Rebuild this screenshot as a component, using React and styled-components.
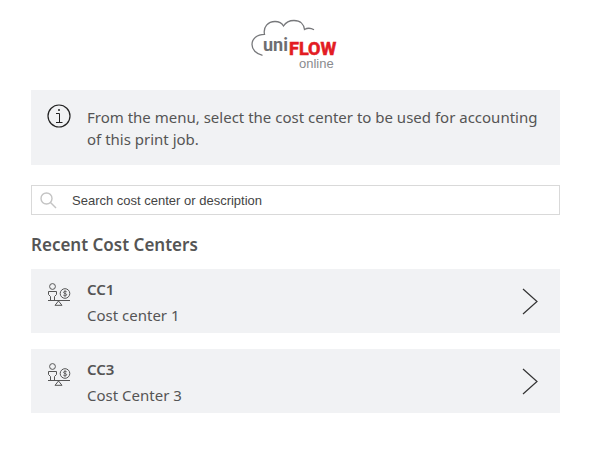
import React, { useState } from 'react';
import styled, { createGlobalStyle } from 'styled-components';

const costCenters = [
  { code: 'CC1', description: 'Cost center 1' },
  { code: 'CC3', description: 'Cost Center 3' },
]

const Logo = () => (
  <svg width="91" height="54" viewBox="10 7 91 54" role="img" aria-label="uniFLOW online">
    <path
      d="M22.500 45.300C16 44 12 39.500 12 34.500C12 29 17 24.300 24.500 24.300C23 17 28 11.500 35 11.500C39 11.500 42 13.300 43.500 16C46 12 50 10.500 54 10.500C60.500 10.500 64 14.500 64.500 19.500C67 18 71 18 74 19.800"
      fill="none" stroke="#77787b" strokeWidth="1.3"
    />
    <BrandText x="23" y="41" fill="#6d6e71">uni</BrandText>
    <BrandText x="49" y="45" fill="#e31b23" stroke="#e31b23" strokeWidth="0.600">FLOW</BrandText>
    <OnlineText x="59" y="58" fill="#8a8b8e">online</OnlineText>
  </svg>
)

const InfoIcon = () => (
  <svg width="24" height="24" viewBox="0 0 24 24" fill="none" stroke="#222" aria-hidden="true">
    <circle cx="12" cy="12" r="11" strokeWidth="1.2" />
    <path d="M9 9.500H12.500V18.500M9 18.500H15.500" />
    <circle cx="12" cy="6" r="1" fill="#222" stroke="none" />
  </svg>
)

const SearchIcon = () => (
  <svg width="18" height="18" viewBox="0 0 18 18" fill="none" stroke="#c4c4c4" strokeWidth="1.4" aria-hidden="true">
    <circle cx="6.500" cy="7.500" r="5.500" />
    <path d="M10.500 11.500L16 17" />
  </svg>
)

const BalanceIcon = () => (
  <svg width="24" height="24" viewBox="0 0 24 24" fill="none" stroke="#555" aria-hidden="true">
    <circle cx="5.500" cy="3.500" r="2.900" />
    <path d="M1.500 8.500H9.500V11.500L7.500 13.500V17.500H3.500V13.500L1.500 11.500Z" />
    <circle cx="18" cy="10.500" r="4.800" />
    <path d="M19.700 8.800C19 8 16.500 8.100 16.500 9.400C16.500 10.700 19.700 10.300 19.700 11.700C19.700 13 17 13.200 16.300 12.100M18 7.300V13.700" strokeWidth="0.900" />
    <path d="M1 17.500H23M11.500 18L8 22.300H15Z" />
  </svg>
)

const ArrowIcon = () => (
  <svg width="16" height="28" viewBox="0 0 16 28" fill="none" stroke="#333" strokeWidth="1.200" aria-hidden="true">
    <path d="M1 1L15 13.500L1 26" />
  </svg>
)

export default () => {
  const [ search, setSearch ] = useState('')

  return (
    <Page>
      <GlobalStyle />
      <Header>
        <Logo />
      </Header>
      <InfoBox>
        <InfoIcon />
        <InfoText>From the menu, select the cost center to be used for accounting of this print job.</InfoText>
      </InfoBox>
      <SearchBox>
        <SearchIcon />
        <SearchInput
          type="text"
          name="search"
          aria-label="Search cost center or description"
          placeholder="Search cost center or description"
          value={search}
          onChange={(e) => { setSearch(e.target.value) }}
        />
      </SearchBox>
      <Title>Recent Cost Centers</Title>
      <List>
        {costCenters.map(({ code, description }) => (
          <li key={code}>
            <CostCenter type="button">
              <BalanceIcon />
              <Details>
                <Code>{code}</Code>
                <span>{description}</span>
              </Details>
              <ArrowIcon />
            </CostCenter>
          </li>
        ))}
      </List>
    </Page>
  )
}

const GlobalStyle = createGlobalStyle`
  * {
    box-sizing: border-box;
  }

  body {
    margin: 0;
    background-color: #fff;
    color: #555;
    font-family: "Segoe UI", "Noto Sans", sans-serif;
    font-size: 15px;
    line-height: 22px;
  }`

const Page = styled.main`
  padding: 17px 40px 32px 31px;
`

const Header = styled.header`
  display: flex;
  justify-content: center;
  margin-bottom: 19px;
`

const BrandText = styled.text`
  font-family: Roboto, Arial, sans-serif;
  font-size: 18px;
  font-weight: 700;
`

const OnlineText = styled.text`
  font-family: "Liberation Sans", Arial, sans-serif;
  font-size: 13px;
`

const InfoBox = styled.section`
  display: flex;
  gap: 16px;
  padding: 14px 16px 15px;
  background-color: #f1f2f4;

  svg {
    flex: none;
  }
`

const InfoText = styled.p`
  margin: 2px 0 0;
`

const SearchBox = styled.div`
  display: flex;
  align-items: center;
  gap: 14px;
  height: 30px;
  margin-top: 20px;
  padding: 0 8px;
  border: 1px solid #d9d9d9;

  svg {
    flex: none;
  }
`

const SearchInput = styled.input`
  flex: 1;
  min-width: 0;
  padding: 0;
  border: none;
  outline: none;
  background: none;
  color: #444;
  font-family: "Liberation Sans", Arial, sans-serif;
  font-size: 13px;

  &::placeholder {
    color: #444;
    opacity: 1;
  }
`

const Title = styled.h1`
  margin: 18px 0 12px;
  font-size: 17px;
  font-weight: 600;
  line-height: 24px;
`

const List = styled.ul`
  display: flex;
  flex-direction: column;
  gap: 16px;
  margin: 0;
  padding: 0;
  list-style: none;
`

const CostCenter = styled.button`
  display: flex;
  align-items: center;
  gap: 16px;
  width: 100%;
  padding: 9px 22px 7px 16px;
  border: none;
  background-color: #f1f2f4;
  color: inherit;
  font: inherit;
  text-align: left;
  cursor: pointer;

  svg {
    flex: none;
  }

  svg:first-child {
    align-self: flex-start;
    margin-top: 5px;
  }
`

const Details = styled.span`
  display: flex;
  flex: 1;
  flex-direction: column;
  gap: 4px;
`

const Code = styled.strong`
  font-weight: 600;
`
